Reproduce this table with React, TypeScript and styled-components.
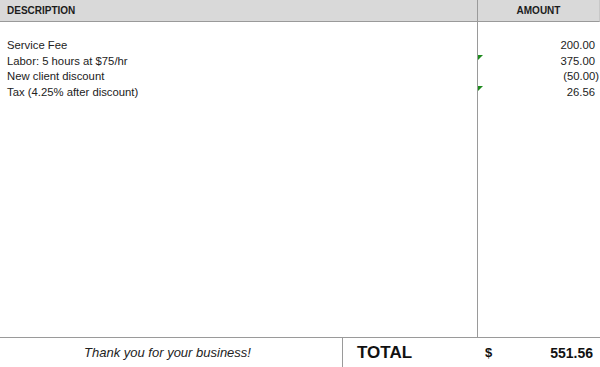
import React from "react";
import styled, { createGlobalStyle } from "styled-components";

const Global = createGlobalStyle`
  html, body { margin: 0; padding: 0; background: #ffffff; }
  body { font-family: "Liberation Sans", Arial, sans-serif; color: #222; }
`;

const Sheet = styled.div`
  width: 600px;
  height: 367px;
  display: flex;
  flex-direction: column;
  overflow: hidden;
  background: #fff;
`;

const HeaderRow = styled.div`
  display: grid;
  grid-template-columns: 477px 1fr;
  height: 22px;
  background: #d9d9d9;
  border-bottom: 1px solid #9a9a9a;
  border-right: 1px solid #c8c8c8;
  box-sizing: border-box;
  flex: none;
`;

const HeaderCell = styled.div<{ $align: "left" | "center" }>`
  display: flex;
  align-items: center;
  justify-content: ${(p) => (p.$align === "center" ? "center" : "flex-start")};
  padding-left: ${(p) => (p.$align === "center" ? "0" : "7px")};
  font-size: 10px;
  font-weight: bold;
  color: #1c1c1c;
  box-sizing: border-box;
  & + & {
    border-left: 1px solid #9a9a9a;
  }
`;

const Body = styled.div`
  flex: 1;
  display: grid;
  grid-template-columns: 477px 1fr;
`;

const DescCol = styled.div`
  padding-top: 16px;
  display: flex;
  flex-direction: column;
`;

const AmountCol = styled.div`
  padding-top: 16px;
  border-left: 1px solid #9a9a9a;
  display: flex;
  flex-direction: column;
`;

const DescLine = styled.div`
  height: 15.67px;
  line-height: 15.67px;
  font-size: 11.3px;
  padding-left: 7px;
  white-space: nowrap;
`;

const AmountLine = styled.div<{ $flag?: boolean; $neg?: boolean }>`
  position: relative;
  height: 15.67px;
  line-height: 15.67px;
  font-size: 11.3px;
  text-align: right;
  padding-right: ${(p) => (p.$neg ? "1px" : "5px")};
  white-space: nowrap;
  &::before {
    content: "";
    display: ${(p) => (p.$flag ? "block" : "none")};
    position: absolute;
    left: 0;
    top: 1px;
    width: 0;
    height: 0;
    border-top: 5px solid #1d8a1d;
    border-right: 5px solid transparent;
  }
`;

const Footer = styled.div`
  height: 29px;
  flex: none;
  border-top: 1px solid #9a9a9a;
  display: grid;
  grid-template-columns: 343px 1fr;
  align-items: stretch;
`;

const Thanks = styled.div`
  border-right: 1px solid #9a9a9a;
  display: flex;
  align-items: center;
  justify-content: center;
  padding-right: 7px;
  font-size: 13px;
  font-style: italic;
  color: #222;
`;

const TotalBox = styled.div`
  display: grid;
  grid-template-columns: 128px 20px 1fr;
  align-items: center;
  padding-left: 14px;
  padding-right: 7px;
  font-weight: bold;
  color: #111;
`;

const TotalLabel = styled.span`
  font-size: 17px;
`;

const Dollar = styled.span`
  font-size: 13px;
`;

const TotalValue = styled.span`
  font-size: 14px;
  text-align: right;
`;

const items = [
  { desc: "Service Fee", amount: "200.00" },
  { desc: "Labor: 5 hours at $75/hr", amount: "375.00", flag: true },
  { desc: "New client discount", amount: "(50.00)", neg: true },
  { desc: "Tax (4.25% after discount)", amount: "26.56", flag: true },
];

export default function App() {
  return (
    <>
      <Global />
      <Sheet>
        <HeaderRow>
          <HeaderCell $align="left">DESCRIPTION</HeaderCell>
          <HeaderCell $align="center">AMOUNT</HeaderCell>
        </HeaderRow>
        <Body>
          <DescCol>
            {items.map((it) => (
              <DescLine key={it.desc}>{it.desc}</DescLine>
            ))}
          </DescCol>
          <AmountCol>
            {items.map((it) => (
              <AmountLine key={it.desc} $flag={it.flag} $neg={it.neg}>
                {it.amount}
              </AmountLine>
            ))}
          </AmountCol>
        </Body>
        <Footer>
          <Thanks>Thank you for your business!</Thanks>
          <TotalBox>
            <TotalLabel>TOTAL</TotalLabel>
            <Dollar>$</Dollar>
            <TotalValue>551.56</TotalValue>
          </TotalBox>
        </Footer>
      </Sheet>
    </>
  );
}
